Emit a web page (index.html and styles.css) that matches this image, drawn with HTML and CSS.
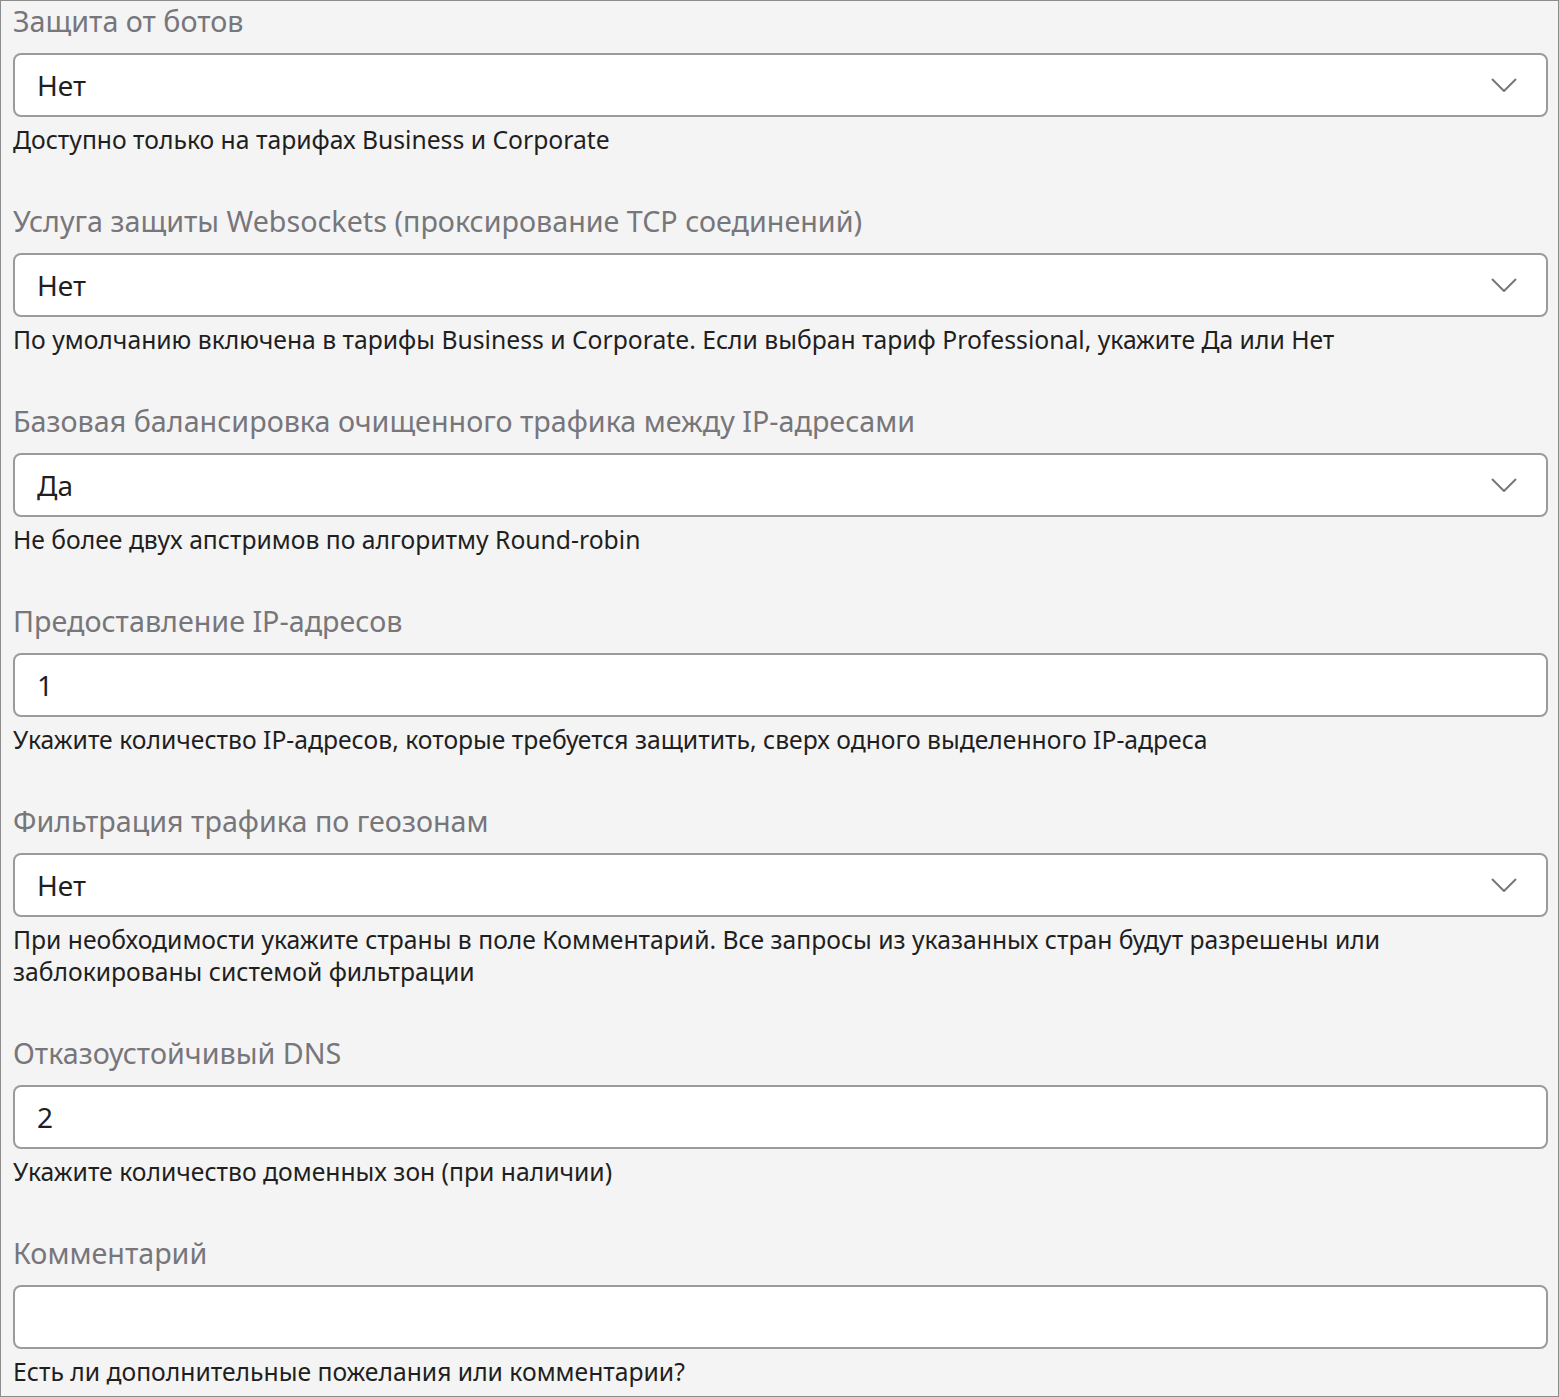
FILE: index.html
```html
<!DOCTYPE html>
<html lang="ru">
<head>
    <meta charset="UTF-8">
    <meta name="viewport" content="width=device-width, initial-scale=1.0">
    <title>Параметры защиты</title>
    <link rel="stylesheet" href="styles.css">
</head>
<body>
    <div class="form">
        <div class="field">
            <div class="label">Защита от ботов</div>
            <div class="control select">
                <span class="value">Нет</span>
                <svg class="chevron" width="26" height="14" viewBox="0 0 26 14"><path d="M1 1 L13 13 L25 1" fill="none" stroke="#77767b" stroke-width="2"/></svg>
            </div>
            <div class="hint">Доступно только на тарифах Business и Corporate</div>
        </div>

        <div class="field">
            <div class="label">Услуга защиты Websockets (проксирование TCP соединений)</div>
            <div class="control select">
                <span class="value">Нет</span>
                <svg class="chevron" width="26" height="14" viewBox="0 0 26 14"><path d="M1 1 L13 13 L25 1" fill="none" stroke="#77767b" stroke-width="2"/></svg>
            </div>
            <div class="hint">По умолчанию включена в тарифы Business и Corporate. Если выбран тариф Professional, укажите Да или Нет</div>
        </div>

        <div class="field">
            <div class="label">Базовая балансировка очищенного трафика между IP-адресами</div>
            <div class="control select">
                <span class="value">Да</span>
                <svg class="chevron" width="26" height="14" viewBox="0 0 26 14"><path d="M1 1 L13 13 L25 1" fill="none" stroke="#77767b" stroke-width="2"/></svg>
            </div>
            <div class="hint">Не более двух апстримов по алгоритму Round-robin</div>
        </div>

        <div class="field">
            <div class="label">Предоставление IP-адресов</div>
            <div class="control">
                <span class="value">1</span>
            </div>
            <div class="hint">Укажите количество IP-адресов, которые требуется защитить, сверх одного выделенного IP-адреса</div>
        </div>

        <div class="field">
            <div class="label">Фильтрация трафика по геозонам</div>
            <div class="control select">
                <span class="value">Нет</span>
                <svg class="chevron" width="26" height="14" viewBox="0 0 26 14"><path d="M1 1 L13 13 L25 1" fill="none" stroke="#77767b" stroke-width="2"/></svg>
            </div>
            <div class="hint">При необходимости укажите страны в поле Комментарий. Все запросы из указанных стран будут разрешены или<br>заблокированы системой фильтрации</div>
        </div>

        <div class="field">
            <div class="label">Отказоустойчивый DNS</div>
            <div class="control">
                <span class="value">2</span>
            </div>
            <div class="hint">Укажите количество доменных зон (при наличии)</div>
        </div>

        <div class="field last">
            <div class="label">Комментарий</div>
            <div class="control">
                <span class="value"></span>
            </div>
            <div class="hint">Есть ли дополнительные пожелания или комментарии?</div>
        </div>
    </div>
</body>
</html>
```

FILE: styles.css
```css
html, body {
    margin: 0;
    padding: 0;
}
body {
    font-family: 'Noto Sans', 'Open Sans', sans-serif;
    background: #f4f4f4;
}
.form {
    box-sizing: border-box;
    width: 1559px;
    height: 1397px;
    border: 1px solid #8c8c8c;
    padding: 4px 10px 0 12px;
    background: #f4f4f4;
    overflow: hidden;
}
.field {
    margin-bottom: 49px;
}
.field.last {
    margin-bottom: 0;
}
.label {
    font-size: 28.7px;
    line-height: 32px;
    color: #77767b;
    margin-bottom: 16px;
}
.control {
    box-sizing: border-box;
    height: 64px;
    background: #fff;
    border: 2px solid #9b9a9f;
    border-radius: 8px;
    display: flex;
    align-items: center;
    justify-content: space-between;
    padding: 0 29px 0 22px;
}
.value {
    font-size: 28px;
    color: #1f1f1f;
}
.chevron {
    display: block;
    width: 26px;
    height: 14px;
}
.hint {
    margin-top: 7px;
    font-size: 24.7px;
    line-height: 32px;
    color: #1f1f1f;
}
```
